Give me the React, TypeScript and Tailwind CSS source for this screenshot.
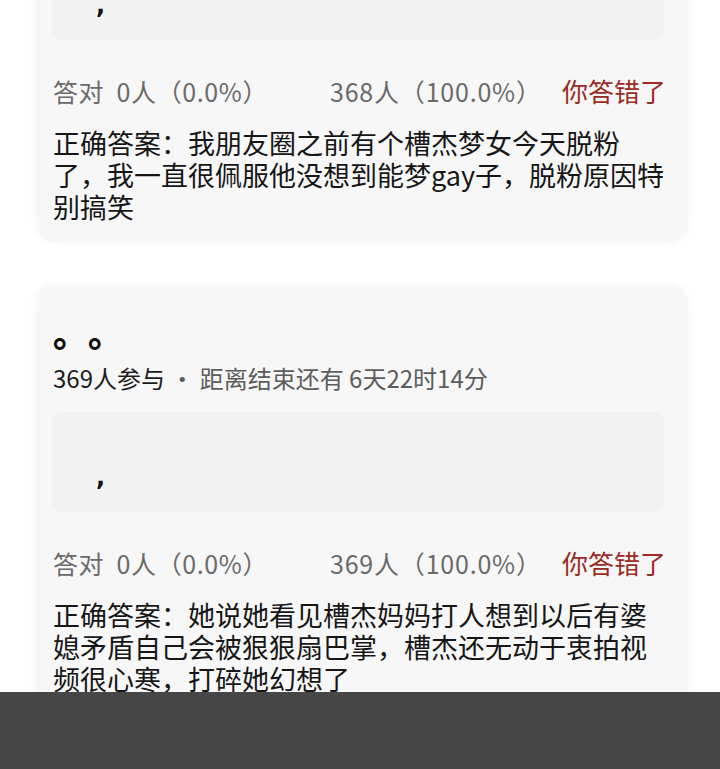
import React from "react";

const FONT = { fontFamily: '"Noto Sans CJK SC", "Noto Sans", sans-serif' };

type Quiz = {
  title?: boolean;
  participants?: string;
  remaining?: string;
  right: string;
  wrong: string;
  answer: string;
};

function QuizCard({ quiz, className }: { quiz: Quiz; className?: string }) {
  return (
    <div
      className={`rounded-[18px] bg-[#f7f7f7] pl-[17px] pr-[24px] pb-[19px] shadow-[0_0_12px_rgba(0,0,0,0.04)] ${className ?? ""}`}
    >
      {quiz.title && (
        <>
          {/* two full-stop marks as the poll title */}
          <div className="flex pt-[27px] h-[67px] text-[35px] leading-[40px] font-black text-[#111]">
            <span className="w-[35px]">。</span>
            <span className="w-[35px]">。</span>
          </div>
          <div className="mt-[10px] h-[32px] text-[24px] leading-[32px] whitespace-nowrap">
            <span className="text-[#1c1c1c]">{quiz.participants}</span>
            <span className="text-[#5c5c5c]"> · {quiz.remaining}</span>
          </div>
        </>
      )}
      <div className="mt-[18px] -ml-px h-[100px] rounded-[10px] bg-[#f2f2f2] pl-[44px] pt-[53px]">
        <span
          className="text-[24px] leading-[24px] font-bold text-[#111]"
          style={{ fontFamily: '"DejaVu Sans", sans-serif' }}
        >
          ,
        </span>
      </div>
      <div className="mt-[35px] flex h-[32px] items-center text-[25px] leading-[32px] whitespace-pre">
        <span className="w-[277px] text-[#6a6a6a] tracking-[0.6px]">{quiz.right}</span>
        <span className="text-[#6a6a6a] tracking-[0.8px]">{quiz.wrong}</span>
        <span className="ml-auto -mr-[2px] text-[26px] text-[#9b2b25]">你答错了</span>
      </div>
      <p className="mt-[20px] text-[27px] leading-[32px] text-[#161616]">{quiz.answer}</p>
    </div>
  );
}

export default function App() {
  const first: Quiz = {
    right: "答对  0人（0.0%）",
    wrong: "368人（100.0%）",
    answer: "正确答案：我朋友圈之前有个槽杰梦女今天脱粉了，我一直很佩服他没想到能梦gay子，脱粉原因特别搞笑",
  };
  const second: Quiz = {
    title: true,
    participants: "369人参与",
    remaining: "距离结束还有 6天22时14分",
    right: "答对  0人（0.0%）",
    wrong: "369人（100.0%）",
    answer: "正确答案：她说她看见槽杰妈妈打人想到以后有婆媳矛盾自己会被狠狠扇巴掌，槽杰还无动于衷拍视频很心寒，打碎她幻想了",
  };

  return (
    <div className="flex h-[769px] w-[720px] flex-col overflow-hidden bg-white" style={FONT}>
      <div className="flex-1 overflow-hidden pl-[36px] pr-[32px]">
        <QuizCard quiz={first} className="-mt-[78px]" />
        <QuizCard quiz={second} className="mt-[43px]" />
      </div>
      <div className="h-[77px] shrink-0 bg-[#464646]" />
    </div>
  );
}
